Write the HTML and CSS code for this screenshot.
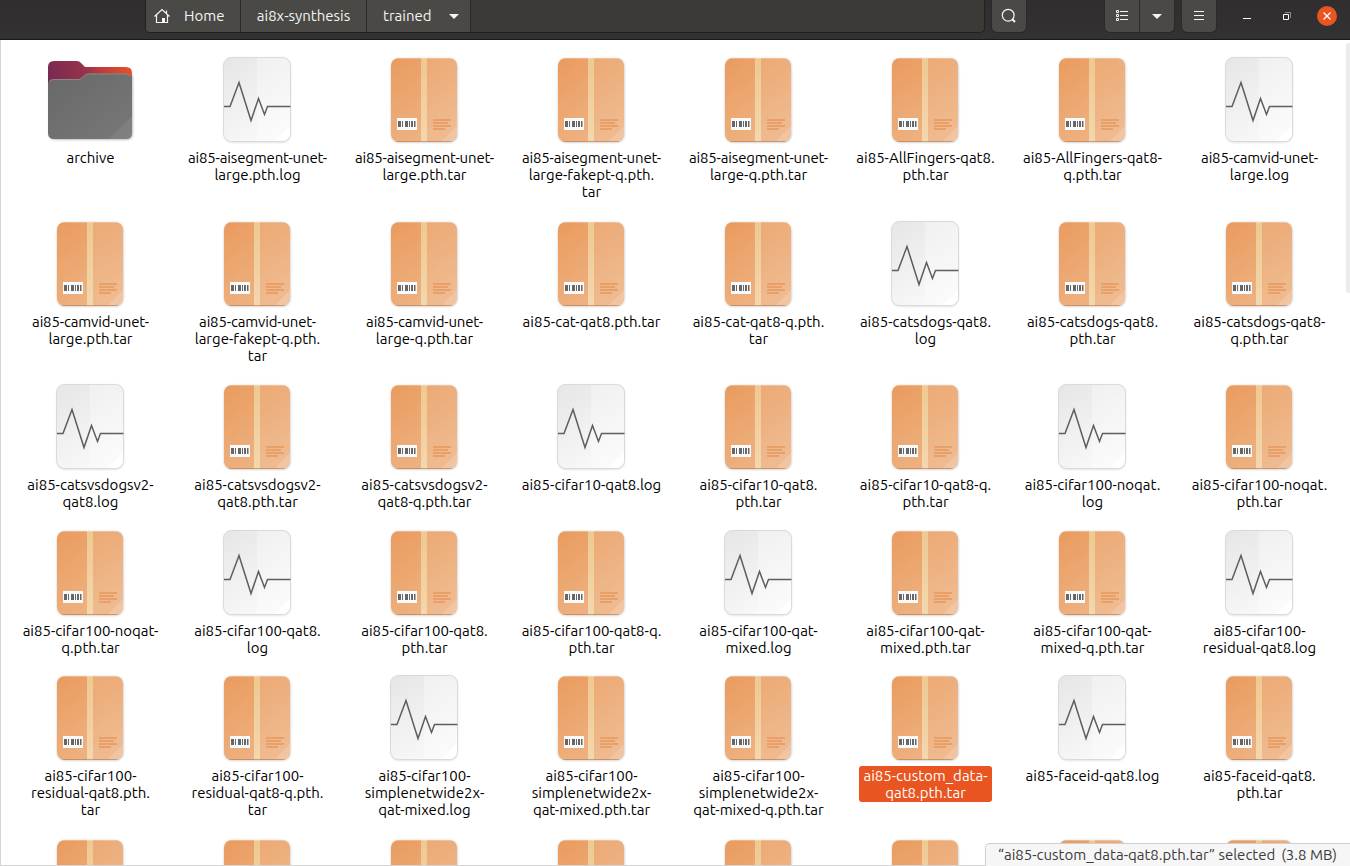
FILE: index.html
```
<!DOCTYPE html>
<html lang="en">
<head>
<meta charset="utf-8">
<title>trained</title>
<link rel="stylesheet" href="styles.css">
</head>
<body>
<svg class="defs" width="0" height="0" aria-hidden="true">
  <defs>
    <linearGradient id="pkgFill" x1="0" y1="0" x2=".6" y2="1"><stop offset="0" stop-color="#ea9b5e"/><stop offset="1" stop-color="#eeb484"/></linearGradient>
    <linearGradient id="tapeFill" x1="0" y1="0" x2="0" y2="1"><stop offset="0" stop-color="#eec991"/><stop offset="1" stop-color="#f3d7ae"/></linearGradient>
    <linearGradient id="logFill" x1="0" y1="0" x2=".5" y2="1"><stop offset="0" stop-color="#e6e6e6"/><stop offset="1" stop-color="#f8f8f8"/></linearGradient>
    <linearGradient id="backFill" x1="0" y1=".3" x2="1" y2="0"><stop offset="0" stop-color="#772953"/><stop offset=".45" stop-color="#97324a"/><stop offset=".6" stop-color="#b93c3e"/><stop offset="1" stop-color="#f0541f"/></linearGradient>
    <linearGradient id="frontFill" x1="0" y1="0" x2="1" y2="1"><stop offset="0" stop-color="#686868"/><stop offset="1" stop-color="#787878"/></linearGradient>
    <clipPath id="sheet"><rect x="14" y="6" width="66" height="84" rx="8"/></clipPath>
    <filter id="soft" x="-10%" y="-10%" width="120%" height="120%"><feGaussianBlur stdDeviation="1"/></filter>
  </defs>
  <symbol id="pkg" viewBox="0 0 96 96">
    <rect x="14" y="6.5" width="66.5" height="84" rx="8" opacity=".22" filter="url(#soft)"/>
    <g clip-path="url(#sheet)">
      <rect x="14" y="6" width="66" height="84" fill="url(#pkgFill)"/>
      <rect x="50" y="6" width="30" height="84" fill="#fff" opacity=".09"/>
      <path d="M80 74 64 90H80Z" fill="#fff" opacity=".17"/>
      <rect x="44" y="6" width="6" height="84" fill="url(#tapeFill)"/>
      <path d="M14 89.5H80" stroke="#b97d50" opacity=".65"/>
      <path d="M14 6.5H80" stroke="#fff" opacity=".25"/>
    </g>
    <rect x="20" y="66" width="20" height="12" fill="#fafafa"/>
    <path d="M21 69h3v6h-3zM25 69h1v6h-1zM28 69h3v6h-3zM32 69h1v6h-1zM34 69h2v6h-2zM37 69h1.5v6H37z" fill="#666"/>
    <path d="M56 67h18v2H56zM56 70h15v2H56zM56 73h18v2H56zM56 76h12v2H56z" fill="#e8a068"/>
  </symbol>
  <symbol id="log" viewBox="0 0 96 96">
    <rect x="14" y="6" width="66.5" height="84.5" rx="8" opacity=".15" filter="url(#soft)"/>
    <rect x="13.5" y="5.5" width="67" height="84" rx="8" fill="url(#logFill)" stroke="#dadada"/>
    <path d="M47 6H72a8 8 0 0 1 8 8V81a8 8 0 0 1-8 8H47Z" fill="#fff" opacity=".3"/>
    <path d="M80 74 64 89H72a8 8 0 0 0 8-8Z" fill="#fff"/>
    <path d="M14 54.6H20L29 30.500 41 68.500 48.500 46.500 54.500 62.500 57.500 54.600H80.500" fill="none" stroke="#5e5e5e" stroke-width="1.5"/>
  </symbol>
  <symbol id="folder" viewBox="0 0 96 96">
    <rect x="6" y="20" width="84" height="68" rx="6" opacity=".25" filter="url(#soft)"/>
    <path d="M11 9H34Q36.500 9 38 11L42 15H83Q89 15 89 21V70H5V15Q5 9 11 9Z" fill="url(#backFill)"/>
    <path d="M5 33Q5 27 11 27H35Q37.500 27 39 25.500L41.500 23Q43 21.500 45 21.500H83Q89 21.500 89 27.500V81Q89 87 83 87H11Q5 87 5 81Z" fill="url(#frontFill)"/>
    <path d="M6 30Q7.500 27.500 11 27.500H35Q37.500 27.500 39 26L41.500 23.500Q43 22 45 22H83Q86 22 88 24.500" fill="none" stroke="#9a8c88" stroke-width=".8"/>
    <path d="M89 64 66 87H83Q89 87 89 81Z" fill="#fff" opacity=".07"/>
  </symbol>
</svg>

<header class="titlebar">
  <nav class="path">
    <span class="crumb crumb-home"><svg width="16" height="16" viewBox="0 0 16 16"><path d="M.5 8.500 8 1.500 15.500 8.500M2.500 7V14.500H13.500V7M12.500 2.500V5" fill="none" stroke="#f4f4f2" stroke-width="1.200"/><path d="M8 10h3v4.500H8z" fill="#f4f4f2"/></svg>Home</span>
    <span class="crumb crumb-mid">ai8x-synthesis</span>
    <span class="crumb crumb-last">trained<i class="arrow"></i></span>
  </nav>
  <button class="btn search"><svg width="16" height="16" viewBox="0 0 16 16"><circle cx="7.200" cy="7.200" r="5.900" fill="none" stroke="#f4f4f2" stroke-width="1.200"/><path d="M11.300 11.300 14 14" stroke="#f4f4f2" stroke-width="2"/></svg></button>
  <div class="views">
    <button class="btn"><svg width="12" height="12" viewBox="0 0 12 12"><path d="M.5.5h2v2h-2zM.5 4.500h2v2h-2zM.5 8.500h2v2h-2zM4 1.500h8M4 5.500h8M4 9.500h8" fill="none" stroke="#f4f4f2"/></svg></button>
    <button class="btn"><i class="arrow"></i></button>
  </div>
  <button class="btn"><svg width="10" height="12" viewBox="0 0 10 12"><path d="M0 1.500h10M0 5.500h10M0 9.500h10" stroke="#f4f4f2"/></svg></button>
  <div class="controls">
    <svg width="8" height="16" viewBox="0 0 8 16"><path d="M0 10.500h8" stroke="#fff"/></svg>
    <svg width="8" height="16" viewBox="0 0 8 16"><path d="M.5 6.500h5v5h-5z" fill="none" stroke="#fff"/><path d="M2 4.500h5.500V10" fill="none" stroke="#8b8a88"/></svg>
    <svg width="20" height="20" viewBox="0 0 20 20"><circle cx="10" cy="10" r="10" fill="#e95420"/><path d="M6.500 6.500l7 7M13.500 6.500l-7 7" stroke="#fff" stroke-width="1.300"/></svg>
  </div>
</header>

<main class="files">
  <div class="item"><svg><use href="#folder"/></svg><p>archive</p></div>
  <div class="item"><svg><use href="#log"/></svg><p><span class="tight">ai85-aisegment-unet-</span><br>large.pth.log</p></div>
  <div class="item"><svg><use href="#pkg"/></svg><p><span class="tight">ai85-aisegment-unet-</span><br>large.pth.tar</p></div>
  <div class="item"><svg><use href="#pkg"/></svg><p><span class="tight">ai85-aisegment-unet-</span><br>large-fakept-q.pth.<br>tar</p></div>
  <div class="item"><svg><use href="#pkg"/></svg><p><span class="tight">ai85-aisegment-unet-</span><br>large-q.pth.tar</p></div>
  <div class="item"><svg><use href="#pkg"/></svg><p>ai85-AllFingers-qat8.<br>pth.tar</p></div>
  <div class="item"><svg><use href="#pkg"/></svg><p>ai85-AllFingers-qat8-<br>q.pth.tar</p></div>
  <div class="item"><svg><use href="#log"/></svg><p><span class="tight">ai85-camvid-unet-</span><br>large.log</p></div>

  <div class="item"><svg><use href="#pkg"/></svg><p><span class="tight">ai85-camvid-unet-</span><br>large.pth.tar</p></div>
  <div class="item"><svg><use href="#pkg"/></svg><p><span class="tight">ai85-camvid-unet-</span><br>large-fakept-q.pth.<br>tar</p></div>
  <div class="item"><svg><use href="#pkg"/></svg><p><span class="tight">ai85-camvid-unet-</span><br>large-q.pth.tar</p></div>
  <div class="item"><svg><use href="#pkg"/></svg><p>ai85-cat-qat8.pth.tar</p></div>
  <div class="item"><svg><use href="#pkg"/></svg><p>ai85-cat-qat8-q.pth.<br>tar</p></div>
  <div class="item"><svg><use href="#log"/></svg><p>ai85-catsdogs-qat8.<br>log</p></div>
  <div class="item"><svg><use href="#pkg"/></svg><p>ai85-catsdogs-qat8.<br>pth.tar</p></div>
  <div class="item"><svg><use href="#pkg"/></svg><p>ai85-catsdogs-qat8-<br>q.pth.tar</p></div>

  <div class="item"><svg><use href="#log"/></svg><p>ai85-catsvsdogsv2-<br>qat8.log</p></div>
  <div class="item"><svg><use href="#pkg"/></svg><p>ai85-catsvsdogsv2-<br>qat8.pth.tar</p></div>
  <div class="item"><svg><use href="#pkg"/></svg><p>ai85-catsvsdogsv2-<br>qat8-q.pth.tar</p></div>
  <div class="item"><svg><use href="#log"/></svg><p>ai85-cifar10-qat8.log</p></div>
  <div class="item"><svg><use href="#pkg"/></svg><p>ai85-cifar10-qat8.<br>pth.tar</p></div>
  <div class="item"><svg><use href="#pkg"/></svg><p>ai85-cifar10-qat8-q.<br>pth.tar</p></div>
  <div class="item"><svg><use href="#log"/></svg><p>ai85-cifar100-noqat.<br>log</p></div>
  <div class="item"><svg><use href="#pkg"/></svg><p>ai85-cifar100-noqat.<br>pth.tar</p></div>

  <div class="item"><svg><use href="#pkg"/></svg><p>ai85-cifar100-noqat-<br>q.pth.tar</p></div>
  <div class="item"><svg><use href="#log"/></svg><p>ai85-cifar100-qat8.<br>log</p></div>
  <div class="item"><svg><use href="#pkg"/></svg><p>ai85-cifar100-qat8.<br>pth.tar</p></div>
  <div class="item"><svg><use href="#pkg"/></svg><p>ai85-cifar100-qat8-q.<br>pth.tar</p></div>
  <div class="item"><svg><use href="#log"/></svg><p>ai85-cifar100-qat-<br>mixed.log</p></div>
  <div class="item"><svg><use href="#pkg"/></svg><p>ai85-cifar100-qat-<br>mixed.pth.tar</p></div>
  <div class="item"><svg><use href="#pkg"/></svg><p>ai85-cifar100-qat-<br>mixed-q.pth.tar</p></div>
  <div class="item"><svg><use href="#log"/></svg><p>ai85-cifar100-<br>residual-qat8.log</p></div>

  <div class="item"><svg><use href="#pkg"/></svg><p>ai85-cifar100-<br>residual-qat8.pth.<br>tar</p></div>
  <div class="item"><svg><use href="#pkg"/></svg><p>ai85-cifar100-<br>residual-qat8-q.pth.<br>tar</p></div>
  <div class="item"><svg><use href="#log"/></svg><p>ai85-cifar100-<br>simplenetwide2x-<br>qat-mixed.log</p></div>
  <div class="item"><svg><use href="#pkg"/></svg><p>ai85-cifar100-<br>simplenetwide2x-<br>qat-mixed.pth.tar</p></div>
  <div class="item"><svg><use href="#pkg"/></svg><p>ai85-cifar100-<br>simplenetwide2x-<br>qat-mixed-q.pth.tar</p></div>
  <div class="item selected"><svg><use href="#pkg"/></svg><p>ai85-custom_data-<br>qat8.pth.tar</p></div>
  <div class="item"><svg><use href="#log"/></svg><p>ai85-faceid-qat8.log</p></div>
  <div class="item"><svg><use href="#pkg"/></svg><p>ai85-faceid-qat8.<br>pth.tar</p></div>

  <div class="item"><svg><use href="#pkg"/></svg></div>
  <div class="item"><svg><use href="#pkg"/></svg></div>
  <div class="item"><svg><use href="#pkg"/></svg></div>
  <div class="item"><svg><use href="#pkg"/></svg></div>
  <div class="item"><svg><use href="#pkg"/></svg></div>
  <div class="item"><svg><use href="#pkg"/></svg></div>
  <div class="item"><svg><use href="#pkg"/></svg></div>
  <div class="item"><svg><use href="#pkg"/></svg></div>
</main>
<div class="scrollbar"></div>
<div class="status"><span>“ai85-custom_data-qat8.pth.tar” selected</span><span>(3.8 MB)</span></div>
</body>
</html>
```
FILE: styles.css
```
* { box-sizing: border-box; }
body {
  margin: 0;
  height: 866px;
  overflow: hidden;
  display: flex;
  flex-direction: column;
  position: relative;
  background: #fff;
  color: #000;
  font: 15px/17px Ubuntu, "Noto Sans", sans-serif;
}
.defs { position: absolute; }
.titlebar {
  flex: none;
  height: 40px;
  padding: 0 13px 0 145px;
  display: flex;
  align-items: flex-start;
  background: linear-gradient(#302e2f, #343132);
  border-bottom: 1px solid #1b1a1a;
  color: #f4f4f2;
}
.path {
  flex: none;
  width: 840px;
  height: 33px;
  display: flex;
  background: #3b3a37;
  border: 1px solid #222120;
  border-top: 0;
  border-radius: 0 0 5px 5px;
  overflow: hidden;
}
.crumb {
  display: flex;
  align-items: center;
  height: 32px;
  padding-bottom: 1px;
  background: #4a4946;
  border-right: 1px solid #2b2a29;
}
.crumb svg { margin-top: 1px; }
.crumb-home { width: 95px; padding-left: 8px; gap: 14px; }
.crumb-mid { width: 126px; justify-content: center; }
.crumb-last { width: 104px; padding-left: 16px; padding-right: 11px; justify-content: space-between; }
.arrow {
  width: 10px;
  height: 5px;
  margin-top: 1px;
  background: #f4f4f2;
  clip-path: polygon(0 0, 100% 0, 50% 100%);
}
.crumb .arrow { margin-top: 2px; }
.btn {
  flex: none;
  width: 34px;
  height: 32px;
  padding: 0;
  display: flex;
  align-items: center;
  justify-content: center;
  background: #4a4946;
  border: 0;
  border-radius: 0 0 5px 5px;
  box-shadow: 0 0 0 1px #2b292a;
}
.search { margin: 0 79px 0 7px; }
.views { flex: none; display: flex; gap: 1px; margin-right: 8px; }
.views .btn:first-child { border-bottom-right-radius: 0; }
.views .btn:last-child { border-bottom-left-radius: 0; }
.controls {
  flex: 1;
  height: 32px;
  display: flex;
  align-items: center;
  padding-left: 27px;
  gap: 32px;
}
.controls svg { flex: none; }
.controls svg:last-child { margin-left: -6px; }
.files {
  flex: 1;
  min-height: 0;
  overflow: hidden;
  display: grid;
  grid-template-columns: repeat(8, 167px);
  grid-template-rows: 164px 163px 146px 145px 164px 110px;
  padding: 12px 0 0 7px;
  border-left: 1px solid #d5d5d5;
  border-bottom: 1px solid #d5d5d5;
}
.item { display: flex; flex-direction: column; align-items: center; }
.item svg { width: 96px; height: 96px; flex: none; margin-right: 1px; }
.item p {
  margin: 0 2px 0 0;
  padding: 1px 4px;
  text-align: center;
  white-space: nowrap;
  border-radius: 3px;
}
.tight { letter-spacing: -.16px; }
.selected p { background: #e95420; color: #fff; }
.scrollbar {
  position: absolute;
  top: 43px;
  right: 0;
  width: 4px;
  height: 250px;
  background: #ebebeb;
  border-radius: 3px 0 0 3px;
}
.status {
  position: absolute;
  right: 0;
  bottom: 0;
  width: 365px;
  height: 23px;
  padding: 2px 13px 0 12px;
  display: flex;
  justify-content: space-between;
  background: #f6f6f6;
  border: 1px solid #cfcfcf;
  border-width: 1px 0 0 1px;
  border-radius: 5px 0 0 0;
  color: #3b3b3b;
  white-space: nowrap;
}
```
